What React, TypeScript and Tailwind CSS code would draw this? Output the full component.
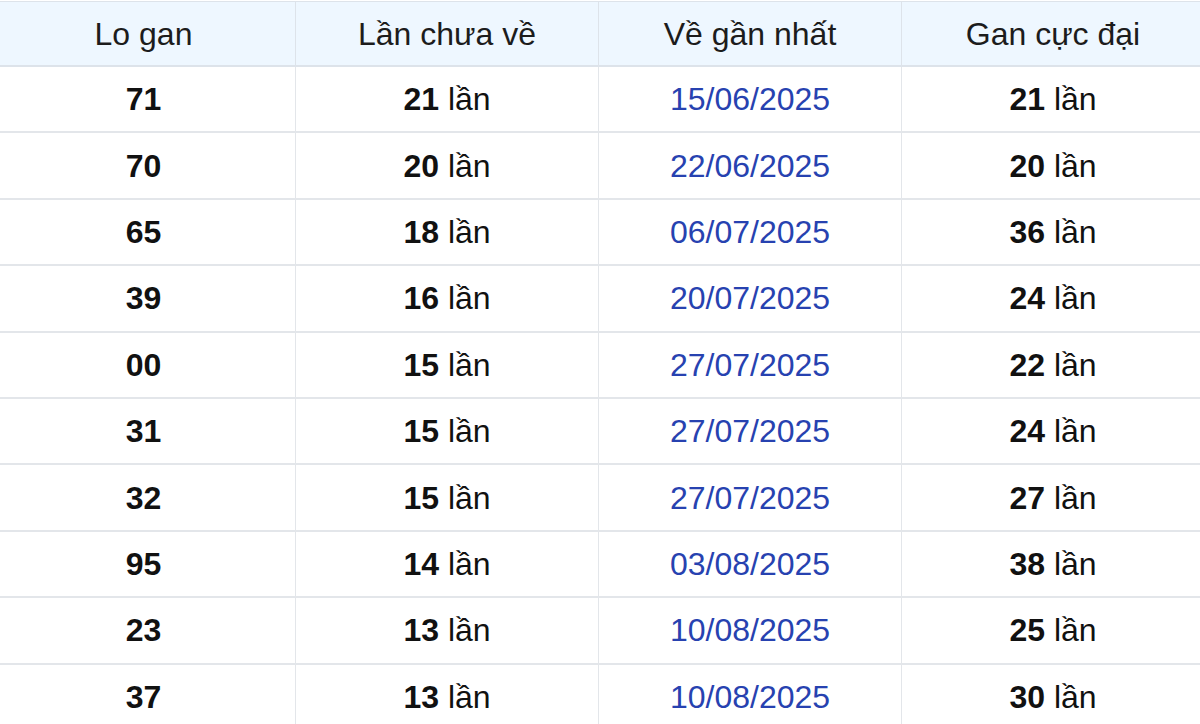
import React from "react";

const rows = [
  ["71", "21", "15/06/2025", "21"],
  ["70", "20", "22/06/2025", "20"],
  ["65", "18", "06/07/2025", "36"],
  ["39", "16", "20/07/2025", "24"],
  ["00", "15", "27/07/2025", "22"],
  ["31", "15", "27/07/2025", "24"],
  ["32", "15", "27/07/2025", "27"],
  ["95", "14", "03/08/2025", "38"],
  ["23", "13", "10/08/2025", "25"],
  ["37", "13", "10/08/2025", "30"],
];

const headers = ["Lo gan", "Lần chưa về", "Về gần nhất", "Gan cực đại"];

export default function App() {
  return (
    <div className="w-[1200px] h-[724px] overflow-hidden bg-white" style={{ fontFamily: '"Liberation Sans", Arial, sans-serif' }}>
      <div className="ml-[-8px] w-[1212px] mt-px border-t border-[#dde3ea]">
        <div className="grid grid-cols-4 h-[65px] bg-[#eef7ff] border-b-2 border-[#dde3ea]">
          {headers.map((h, i) => (
            <div
              key={h}
              className={`flex items-center justify-center text-[32px] text-[#1c1c1c] ${i > 0 ? "border-l border-[#dde3ea]" : ""}`}
            >
              {h}
            </div>
          ))}
        </div>
        {rows.map((r, idx) => (
          <div key={idx} className="grid grid-cols-4 h-[66.4px] border-b-2 border-[#e3e6ea] text-[32px] text-[#111]">
            <div className="flex items-center justify-center font-bold">{r[0]}</div>
            <div className="flex items-center justify-center border-l border-[#e3e6ea]">
              <span className="font-bold">{r[1]}</span>&nbsp;lần
            </div>
            <div className="flex items-center justify-center border-l border-[#e3e6ea] text-[#2742b0]">{r[2]}</div>
            <div className="flex items-center justify-center border-l border-[#e3e6ea]">
              <span className="font-bold">{r[3]}</span>&nbsp;lần
            </div>
          </div>
        ))}
      </div>
    </div>
  );
}
